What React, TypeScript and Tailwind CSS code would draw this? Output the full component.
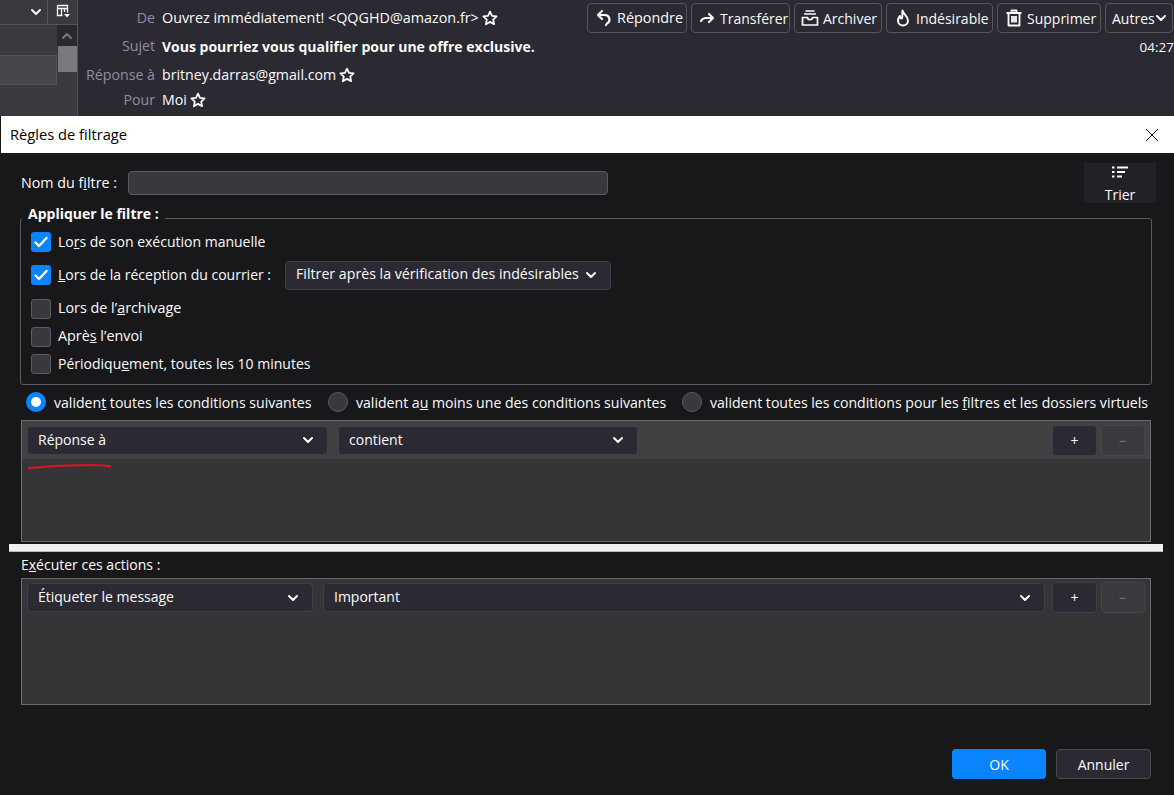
import React from "react";

const FONT = "font-['Open_Sans','Noto_Sans',sans-serif] [font-variant-ligatures:none]";

function Chevron({ className = "" }: { className?: string }) {
  return (
    <svg viewBox="0 0 12 12" className={`w-3 h-3 shrink-0 ${className}`} fill="none" stroke="currentColor" strokeWidth="2" strokeLinecap="round" strokeLinejoin="round">
      <path d="M2 4l4 4 4-4" />
    </svg>
  );
}

function Star() {
  return (
    <svg viewBox="0 0 16 16" className="w-4 h-4 shrink-0" fill="none" stroke="#fbfbfe" strokeWidth="1.800" strokeLinejoin="round">
      <path d="M8 1.600l2 4.200 4.600.6-3.400 3.200.9 4.600L8 11.900l-4.100 2.300.9-4.600L1.400 6.400 6 5.800z" />
    </svg>
  );
}

function ToolButton({ icon, label, width, pad, text = "text-[14px]" }: { icon: React.ReactNode; label: string; width: string; pad: string; text?: string }) {
  return (
    <div className={`${width} ${pad} ${text} h-[30px] flex items-center gap-[4px] rounded border border-[#55555c] text-[#fbfbfe]`}>
      {icon}
      <span>{label}</span>
    </div>
  );
}

function Select({ label, width, text = "text-[14px]" }: { label: React.ReactNode; width: string; text?: string }) {
  return (
    <div className={`${width} ${text} h-[29px] shrink-0 flex items-center justify-between pl-[10px] pr-[13px] rounded border border-[#3f3f47] bg-[#2b2a33] text-[#fbfbfe]`}>
      <span className="mb-[2px]">{label}</span>
      <Chevron />
    </div>
  );
}

function Check({ on, text = "text-[14px]", children }: { on?: boolean; text?: string; children: React.ReactNode }) {
  return (
    <div className="flex items-center gap-[7px]">
      {on ? (
        <div className="w-5 h-5 rounded-[3px] bg-[#0a84ff] flex items-center justify-center">
          <svg viewBox="0 0 16 16" className="w-4 h-4" fill="none" stroke="#fff" strokeWidth="2.400" strokeLinecap="round" strokeLinejoin="round">
            <path d="M2.500 8.500l3.500 3.500 7.500-8" />
          </svg>
        </div>
      ) : (
        <div className="w-5 h-5 rounded-[3px] bg-[#38383d] border border-[#5b5b62]" />
      )}
      <span className={`${text} mb-[2px] text-[#fbfbfe]`}>{children}</span>
    </div>
  );
}

function Radio({ on, children, width }: { on?: boolean; children: React.ReactNode; width: string }) {
  return (
    <div className={`${width} shrink-0 flex items-center gap-2`}>
      {on ? (
        <div className="w-5 h-5 shrink-0 rounded-full bg-[#0a84ff] flex items-center justify-center">
          <div className="w-[10px] h-[10px] rounded-full bg-white" />
        </div>
      ) : (
        <div className="w-5 h-5 shrink-0 rounded-full bg-[#38383d] border border-[#5b5b62]" />
      )}
      <span className="text-[14.100px] text-[#fbfbfe] whitespace-nowrap">{children}</span>
    </div>
  );
}

function PlusMinus() {
  return (
    <div className="flex gap-1 ml-auto mr-[5px]">
      <div className="w-[45px] h-[31px] rounded border border-[#3f3f47] bg-[#2b2a33] flex items-center justify-center text-[#fbfbfe] text-[14px]">+</div>
      <div className="w-[44px] h-[31px] rounded border border-[#47474b] bg-[#3a3a3e] flex items-center justify-center text-[#77777c] text-[14px]">−</div>
    </div>
  );
}

function HeaderRow({ label, height, text = "text-[14.200px]", children }: { label: string; height: string; text?: string; children: React.ReactNode }) {
  return (
    <div className={`${height} flex items-center`}>
      <div className="w-[77px] text-right text-[#8f8f9d] text-[14.200px]">{label}</div>
      <div className={`${text} ml-[7px] flex items-center gap-[3px] text-[#fbfbfe]`}>{children}</div>
    </div>
  );
}

export default function App() {
  return (
    <div className={`w-[1174px] h-[795px] overflow-hidden bg-[#18181b] flex flex-col ${FONT}`}>
      {/* mail window behind the dialog */}
      <div className="h-[116px] shrink-0 flex bg-[#2b2a33]">
        <div className="w-[78px] shrink-0 flex flex-col border-r border-[#55555c] bg-[#3a3940]">
          <div className="h-[25px] flex border-b border-[#55555c] text-[#fbfbfe]">
            <div className="w-[48px] flex items-center justify-end pr-[5px] border-r border-[#55555c]">
              <Chevron />
            </div>
            <div className="flex-1 flex items-center justify-center">
              <svg viewBox="0 0 16 16" className="w-4 h-4" fill="none" stroke="currentColor" strokeWidth="1.300">
                <path d="M2.500 1.500h10v7M2.500 1.500v10h5M2.500 4.500h10M6.500 4.500v7M9.500 4.500v3.500" />
                <path d="M9 10h6l-3 3.500z" fill="currentColor" stroke="none" />
              </svg>
            </div>
          </div>
          <div className="flex-1 flex">
            <div className="flex-1 flex flex-col pt-[30px]">
              <div className="h-[30px] bg-[#47474b] border border-[#55555a] border-l-0" />
            </div>
            <div className="w-[20px] flex flex-col items-center">
              <div className="w-full h-[21px] bg-[#29292d] flex items-center justify-center">
                <Chevron className="text-[#77777c] rotate-180" />
              </div>
              <div className="w-[19px] h-[26px] bg-[#7a7a7e]" />
            </div>
          </div>
        </div>
        <div className="flex-1 flex flex-col min-w-0 relative">
          <div className="pt-[5px]">
            <HeaderRow label="De" height="h-[26px]" text="text-[14.350px]">
              <span>Ouvrez immédiatement! &lt;QQGHD@amazon.fr&gt;</span>
              <Star />
            </HeaderRow>
            <HeaderRow label="Sujet" height="h-[30px]" text="text-[14px]">
              <span className="font-bold">Vous pourriez vous qualifier pour une offre exclusive.</span>
            </HeaderRow>
            <HeaderRow label="Réponse à" height="h-[28px]">
              <span>britney.darras@gmail.com</span>
              <Star />
            </HeaderRow>
            <HeaderRow label="Pour" height="h-[22px]">
              <span>Moi</span>
              <Star />
            </HeaderRow>
          </div>
          <div className="absolute right-[1px] top-[3px] flex flex-col items-end">
            <div className="flex gap-[4px]">
              <ToolButton
                width="w-[100px]"
                pad="pl-[7px]"
                text="text-[14.400px]"
                label="Répondre"
                icon={
                  <svg viewBox="0 0 18 18" className="w-[18px] h-[18px] shrink-0" fill="none" stroke="#fbfbfe" strokeWidth="2.200" strokeLinecap="round" strokeLinejoin="round">
                    <path d="M7 2L3 6l4 4M3 6h7a4.500 4.500 0 0 1 2 8.500L11 16" />
                  </svg>
                }
              />
              <ToolButton
                width="w-[99px]"
                pad="pl-[6px]"
                label="Transférer"
                icon={
                  <svg viewBox="0 0 18 18" className="w-[18px] h-[18px] shrink-0" fill="none" stroke="#fbfbfe" strokeWidth="2.200" strokeLinecap="round" strokeLinejoin="round">
                    <path d="M11 5l4 4-4 4M15 9H8c-2.500 0-4 1-5 3" />
                  </svg>
                }
              />
              <ToolButton
                width="w-[88px]"
                pad="pl-[6px]"
                label="Archiver"
                icon={
                  <svg viewBox="0 0 18 18" className="w-[18px] h-[18px] shrink-0" fill="none" stroke="#fbfbfe" strokeWidth="1.700" strokeLinejoin="round">
                    <path d="M4.500 2h9M3 5h12" />
                    <path d="M1.500 8.500h5a2.500 2.200 0 0 0 5 0h5V16h-15z" />
                  </svg>
                }
              />
              <ToolButton
                width="w-[107px]"
                pad="pl-[7px]"
                label="Indésirable"
                icon={
                  <svg viewBox="0 0 18 18" className="w-[18px] h-[18px] shrink-0" fill="none" stroke="#fbfbfe" strokeWidth="2" strokeLinejoin="round">
                    <path d="M8.500 1.500c.5 3.500 5.500 5.500 5.500 10a5 5 0 0 1-10 0c0-2 1-3.500 2-4.500 0 1.500.8 2.500 1.800 2.500C9 8 8 4.500 8.500 1.500z" />
                  </svg>
                }
              />
              <ToolButton
                width="w-[104px]"
                pad="pl-[7px]"
                label="Supprimer"
                icon={
                  <svg viewBox="0 0 18 18" className="w-[18px] h-[18px] shrink-0" fill="none" stroke="#fbfbfe" strokeWidth="1.800" strokeLinejoin="round">
                    <path d="M1.500 4h15M6.500 4V1.500h5V4M3.500 4v12.500h11V4M7 7v6.500M9 7v6.500M11 7v6.500" />
                  </svg>
                }
              />
              <div className="w-[68px] h-[30px] pl-[6px] flex items-center rounded border border-[#55555c] text-[#fbfbfe] text-[14px]">
                <span>Autres</span>
                <Chevron />
              </div>
            </div>
            <div className="mt-[4px] mr-[-1px] text-[#fbfbfe] text-[13.500px]">04:27</div>
          </div>
        </div>
      </div>

      {/* dialog */}
      <div className="flex-1 min-h-0 flex flex-col ml-[1px]">
        <div className="h-[37px] shrink-0 bg-white flex items-center justify-between pl-[9px] pr-[15px] text-[14.700px] text-black">
          <span>Règles de filtrage</span>
          <svg viewBox="0 0 14 14" className="w-[14px] h-[14px]" fill="none" stroke="#111" strokeWidth="1">
            <path d="M1 1l12 12M13 1L1 13" />
          </svg>
        </div>

        <div className="flex-1 flex flex-col pl-[20px] pr-[23px]">
          {/* name row */}
          <div className="h-[65px] shrink-0 flex items-start">
            <div className="mt-[19px] w-[107px] text-[14.300px] text-[#fbfbfe]">
              Nom du f<u>i</u>ltre :
            </div>
            <div className="mt-[18px] w-[480px] h-[24px] rounded border border-[#5b5b62] bg-[#38383d]" />
            <div className="mt-[10px] ml-auto mr-[-5px] w-[72px] h-[40px] bg-[#222226] flex flex-col items-center text-[14px] text-[#fbfbfe]">
              <svg viewBox="0 0 18 18" className="w-[18px] h-[18px] shrink-0 mt-[1px]" fill="none" stroke="#fbfbfe" strokeWidth="1.800">
                <path d="M6 3.500h11M6 8h8M6 12.500h5M1 3.500h2.500M1 8h2.500M1 12.500h2.500" />
              </svg>
              <span className="leading-[20px] mt-[3px]">Trier</span>
            </div>
          </div>

          {/* apply group */}
          <div className="relative h-[167px] shrink-0 rounded-[3px] border border-[#5b5b62] pl-[10px] pt-[13px] ml-[-1px] mr-[-1px]">
            <div className="absolute left-[1px] top-[-16px] bg-[#18181b] px-[6px] text-[14px] font-bold text-[#fbfbfe]">Appliquer le filtre :</div>
            <div className="h-[20px] flex items-center">
              <Check on>
                Lo<u>r</u>s de son exécution manuelle
              </Check>
            </div>
            <div className="mt-[13px] h-[20px] flex items-center gap-[14px]">
              <Check on>
                <u>L</u>ors de la réception du courrier :
              </Check>
              <Select label="Filtrer après la vérification des indésirables" width="w-[326px]" text="text-[14.200px]" />
            </div>
            <div className="mt-[14px] h-[20px] flex items-center">
              <Check text="text-[14.350px]">
                Lors de l’<u>a</u>rchivage
              </Check>
            </div>
            <div className="mt-[8px] h-[20px] flex items-center">
              <Check text="text-[14.350px]">
                Aprè<u>s</u> l’envoi
              </Check>
            </div>
            <div className="mt-[7px] h-[20px] flex items-center">
              <Check>
                Périodiqu<u>e</u>ment, toutes les 10 minutes
              </Check>
            </div>
          </div>

          {/* match radios */}
          <div className="h-[35px] shrink-0 flex items-center pl-[5px]">
            <Radio on width="w-[302px]">
              validen<u>t</u> toutes les conditions suivantes
            </Radio>
            <Radio width="w-[354px]">
              valident a<u>u</u> moins une des conditions suivantes
            </Radio>
            <Radio width="w-[460px]">
              valident toutes les conditions pour les <u>f</u>iltres et les dossiers virtuels
            </Radio>
          </div>

          {/* conditions */}
          <div className="h-[122px] shrink-0 border border-[#6a6a6e] bg-[#353538] relative">
            <div className="h-[38px] bg-[#414144] flex items-center gap-[10px] pl-[5px]">
              <Select label="Réponse à" width="w-[301px]" />
              <Select label="contient" width="w-[300px]" />
              <PlusMinus />
            </div>
            <svg viewBox="0 0 84 8" className="absolute left-[6px] top-[41px] w-[84px] h-[8px]" fill="none" stroke="#e0141b" strokeWidth="2.200" strokeLinecap="round">
              <path d="M1 6c20-2 45-3 60-3 8 0 14 0 21 1.500" />
            </svg>
          </div>

          {/* splitter */}
          <div className="h-[8px] shrink-0 mt-[2px] ml-[-12px] mr-[-12px] bg-[#f2f2f2] border-b border-[#bbbbbb]" />

          <div className="h-[26px] shrink-0 flex items-center text-[14px] text-[#fbfbfe]">
            <span className="mb-[2px]">
              E<u>x</u>écuter ces actions :
            </span>
          </div>

          {/* actions */}
          <div className="h-[127px] shrink-0 border border-[#6a6a6e] bg-[#353538]">
            <div className="h-[37px] flex items-center gap-[7px] pl-[5px]">
              <Select label="Étiqueter le message" width="w-[286px] mr-[3px]" />
              <Select label="Important" width="w-[722px]" />
              <PlusMinus />
            </div>
          </div>

          {/* footer */}
          <div className="mt-[44px] flex justify-end gap-[10px]">
            <div className="w-[94px] h-[30px] rounded bg-[#0a84ff] flex items-center justify-center text-[14px] text-[#fbfbfe]">OK</div>
            <div className="w-[95px] h-[30px] rounded border border-[#4a4a52] bg-[#2b2a33] flex items-center justify-center text-[14px] text-[#fbfbfe]">Annuler</div>
          </div>
        </div>
      </div>
    </div>
  );
}
